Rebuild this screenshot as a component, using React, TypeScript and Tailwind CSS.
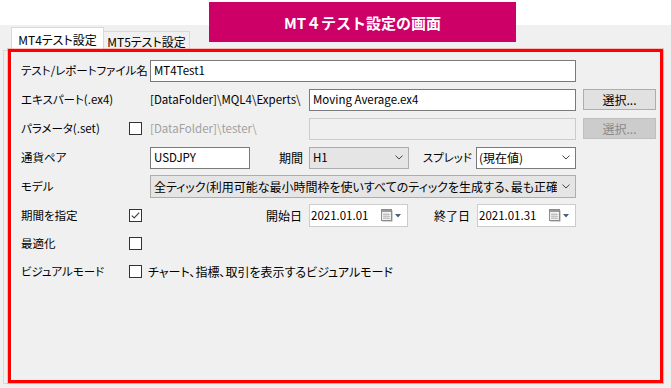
import React from "react";

const FONT = "font-['Noto_Sans_CJK_JP',sans-serif] [font-feature-settings:'palt']";

function Chevron() {
  return (
    <svg width="8" height="5" viewBox="0 0 8 5">
      <path d="M0.5 0.6 L4 4 L7.5 0.6" fill="none" stroke="#444" strokeWidth="1" />
    </svg>
  );
}

function Checkbox({ checked }: { checked?: boolean }) {
  return (
    <div className="w-[13px] h-[13px] border border-[#333333] bg-white flex items-center justify-center shrink-0">
      {checked && (
        <svg width="11" height="11" viewBox="0 0 11 11">
          <path d="M1.8 5.6 L4.2 8 L9.2 2.6" fill="none" stroke="#444" strokeWidth="1.2" />
        </svg>
      )}
    </div>
  );
}

function CalendarIcon() {
  return (
    <svg width="22" height="13" viewBox="0 0 22 13">
      <rect x="1.5" y="1.5" width="10" height="11" fill="#a8a8a8" />
      <rect x="0.5" y="0.5" width="10" height="11" fill="#f2f2f2" stroke="#8c8c8c" />
      <rect x="1" y="1" width="9" height="2" fill="#9a9a9a" />
      <path d="M3 4 V10 M5 4 V10 M7 4 V10 M2 5.5 H9.5 M2 7.5 H9.5 M2 9.5 H9.5" stroke="#bdbdbd" strokeWidth="0.8" />
      <path d="M14 5 H20 L17 8.5 Z" fill="#4e5d7c" />
    </svg>
  );
}

function TextBox({ w, children, pl = "pl-[3px]" }: { w: string; children?: React.ReactNode; pl?: string }) {
  return (
    <div className={`${w} h-[22px] border border-[#7a7a7a] bg-white flex items-center ${pl} text-[11.5px] leading-none text-black shrink-0`}>
      {children}
    </div>
  );
}

function Label({ children }: { children: React.ReactNode }) {
  return <div className="w-[108px] shrink-0 whitespace-nowrap text-[11.5px] leading-none text-black">{children}</div>;
}

function Row({ h = "h-[29px]", children }: { h?: string; children: React.ReactNode }) {
  return <div className={`${h} flex items-center`}>{children}</div>;
}

export default function App() {
  return (
    <div className={`relative w-[671px] h-[388px] bg-white overflow-hidden ${FONT}`}>
      <div className="h-[25px]" />
      <div className="h-[363px] bg-[#f0f0f0] flex flex-col">
        {/* tabs */}
        <div className="h-[25px] flex items-end pl-[11px] relative z-10">
          <div className="w-[93px] h-[24px] -mb-px bg-white border-l border-t border-r border-[#d9d9d9] flex items-center justify-center text-[12px] leading-none text-black pt-[1px]">
            MT4テスト設定
          </div>
          <div className="w-[86px] h-[19px] bg-[#f0f0f0] border-t border-r border-[#d9d9d9] flex items-center justify-center text-[12px] leading-none text-black pt-[2px]">
            MT5テスト設定
          </div>
        </div>
        {/* pane */}
        <div className="ml-[3px] w-[661px] h-[334px] border border-[#d9d9d9] bg-[#f0f0f0] pl-[17px] pt-[5px] flex flex-col">
          <Row>
            <Label>テスト/レポートファイル名</Label>
            <div className="w-[21px] shrink-0" />
            <TextBox w="w-[426px]">MT4Test1</TextBox>
          </Row>
          <Row>
            <Label>エキスパート(.ex4)</Label>
            <div className="w-[21px] shrink-0" />
            <div className="w-[159px] shrink-0 whitespace-nowrap text-[11.5px] leading-none text-black">[DataFolder]\MQL4\Experts\</div>
            <TextBox w="w-[267px]">Moving Average.ex4</TextBox>
            <div className="ml-[7px] w-[73px] h-[21px] border border-[#adadad] bg-[#e1e1e1] flex items-center justify-center text-[12px] leading-none text-black">
              選択...
            </div>
          </Row>
          <Row>
            <Label>パラメータ(.set)</Label>
            <div className="w-[21px] shrink-0">
              <Checkbox />
            </div>
            <div className="w-[159px] shrink-0 whitespace-nowrap text-[11.5px] leading-none text-[#a0a0a0]">[DataFolder]\tester\</div>
            <div className="w-[267px] h-[22px] border border-[#cccccc] bg-[#f0f0f0] shrink-0" />
            <div className="ml-[7px] w-[73px] h-[21px] border border-[#bfbfbf] bg-[#cccccc] flex items-center justify-center text-[12px] leading-none text-[#8a8a8a]">
              選択...
            </div>
          </Row>
          <Row>
            <Label>通貨ペア</Label>
            <div className="w-[21px] shrink-0" />
            <TextBox w="w-[100px]">USDJPY</TextBox>
            <div className="w-[59px] shrink-0 text-right pr-[6px] text-[12px] leading-none text-black">期間</div>
            <div className="w-[100px] h-[22px] border border-[#adadad] bg-[#e5e5e5] flex items-center pl-[3px] pr-[5px] text-[11.5px] leading-none text-black shrink-0">
              <span className="flex-1">H1</span>
              <Chevron />
            </div>
            <div className="w-[67px] shrink-0 text-right pr-[4px] text-[11.5px] leading-none text-black">スプレッド</div>
            <div className="w-[100px] h-[22px] border border-[#7a7a7a] bg-white flex items-center pl-[2px] pr-[5px] text-[12px] leading-none text-black shrink-0">
              <span className="flex-1">(現在値)</span>
              <Chevron />
            </div>
          </Row>
          <Row>
            <Label>モデル</Label>
            <div className="w-[21px] shrink-0" />
            <div className="w-[426px] h-[23px] border border-[#adadad] bg-[#e5e5e5] flex items-center pl-[3px] text-[12px] leading-none text-black shrink-0">
              <span className="flex-1 overflow-hidden whitespace-nowrap">全ティック(利用可能な最小時間枠を使いすべてのティックを生成する、最も正確なメソッド)</span>
              <div className="w-[18px] flex items-center justify-center shrink-0">
                <Chevron />
              </div>
            </div>
          </Row>
          <Row>
            <Label>期間を指定</Label>
            <div className="w-[21px] shrink-0">
              <Checkbox checked />
            </div>
            <div className="w-[159px] shrink-0 text-right pr-[7px] text-[12px] leading-none text-black">開始日</div>
            <div className="w-[99px] h-[23px] border border-[#cccccc] bg-white flex items-center pl-[1px] pr-[4px] text-[11.5px] leading-none text-black shrink-0">
              <span className="flex-1">2021.01.01</span>
              <CalendarIcon />
            </div>
            <div className="w-[69px] shrink-0 text-right pr-[7px] text-[12px] leading-none text-black">終了日</div>
            <div className="w-[99px] h-[23px] border border-[#cccccc] bg-white flex items-center pl-[1px] pr-[4px] text-[11.5px] leading-none text-black shrink-0">
              <span className="flex-1">2021.01.31</span>
              <CalendarIcon />
            </div>
          </Row>
          <Row h="h-[27px]">
            <Label>最適化</Label>
            <div className="w-[21px] shrink-0">
              <Checkbox />
            </div>
          </Row>
          <Row>
            <Label>ビジュアルモード</Label>
            <div className="flex items-center gap-[6px]">
              <Checkbox />
              <span className="whitespace-nowrap text-[12px] leading-none text-black">チャート、指標、取引を表示するビジュアルモード</span>
            </div>
          </Row>
        </div>
      </div>

      {/* red highlight annotation */}
      <div className="absolute left-[8px] top-[49px] w-[655px] h-[334px] border-[3px] border-[#ff0000] shadow-[0_0_0_1px_rgba(255,90,90,0.35)] pointer-events-none z-20">
        <div className="absolute left-0 top-0 bottom-0 w-[2px] bg-white" />
      </div>

      {/* title banner annotation */}
      <div className="absolute left-[209px] top-[2px] w-[307px] h-[40px] bg-[#cc0066] flex items-center justify-center z-30">
        <span className="text-white font-bold text-[15px] leading-none [font-feature-settings:normal]">MT４テスト設定の画面</span>
      </div>
    </div>
  );
}
